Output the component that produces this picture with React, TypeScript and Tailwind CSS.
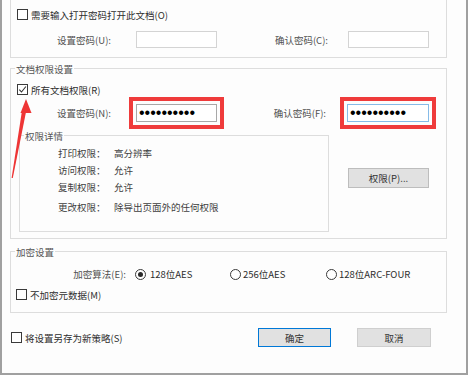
import type { ReactNode } from "react";

function Box({ checked }: { checked?: boolean }) {
  return (
    <span className="w-[11px] h-[11px] shrink-0 border border-[#3a3a3a] bg-white flex items-center justify-center">
      {checked && (
        <svg width="9" height="9" viewBox="0 0 9 9">
          <path d="M1.3 4.6 L3.5 7 L7.9 1.5" fill="none" stroke="#333" strokeWidth="1.1" />
        </svg>
      )}
    </span>
  );
}

function Radio({ on }: { on?: boolean }) {
  return (
    <span className="w-[11px] h-[11px] shrink-0 rounded-full border border-[#3a3a3a] bg-white flex items-center justify-center">
      {on && <span className="w-[5px] h-[5px] rounded-full bg-[#2a2a2a]" />}
    </span>
  );
}

function Legend({ children }: { children: ReactNode }) {
  return <div className="-mt-[7px] ml-[4px] px-[1px] w-fit h-[14px] leading-[14px] bg-[#fdfdfd] text-[#555]">{children}</div>;
}

function Dots({ focus }: { focus?: boolean }) {
  return (
    <div className={focus ? "w-[82px] h-[18px] border border-[#86bbe8] bg-white flex items-center pl-[2px]" : "w-[81px] h-[18px] border border-[#a8a8a8] bg-white flex items-center pl-[2px]"}>
      <span className="font-['Liberation_Sans',sans-serif] text-[16px] leading-none text-black">••••••••••</span>
    </div>
  );
}

export default function App() {
  return (
    <div className="relative w-[469px] h-[376px] bg-white overflow-hidden font-['Noto_Sans_CJK_SC',sans-serif] text-[9.5px] leading-[14px] text-[#3f3f3f]">
      <div className="w-[468px] h-[375px] border-l-2 border-r-2 border-b-2 border-[#a0a0a0] bg-[#fdfdfd] pl-[8px]">
        {/* 打开密码 */}
        <div className="w-[437px] h-[58px] pt-[9px] border-x border-b border-[#dddddd]">
          <div className="ml-[6px] flex items-center gap-[3px] h-[11px]">
            <Box />
            <span className="text-[#2e2e2e]">需要输入打开密码打开此文档(O)</span>
          </div>
          <div className="mt-[11px] flex items-center h-[17px]">
            <div className="w-[100px] text-right text-[#505050]">设置密码(U):</div>
            <div className="ml-[25px] w-[81px] h-[17px] border border-[#d4d4d4] bg-white" />
            <div className="w-[111px] text-right text-[#505050]">确认密码(C):</div>
            <div className="ml-[20px] w-[81px] h-[17px] border border-[#d4d4d4] bg-white" />
          </div>
        </div>

        {/* 文档权限设置 */}
        <div className="mt-[10px] w-[437px] h-[171px] border border-[#dddddd]">
          <Legend>文档权限设置</Legend>
          <div className="mt-[8px] ml-[6px] flex items-center gap-[3px] h-[11px]">
            <Box checked />
            <span className="text-[#2e2e2e]">所有文档权限(R)</span>
          </div>
          <div className="mt-[2px] flex items-center h-[32px]">
            <div className="w-[100px] text-right text-[#505050]">设置密码(N):</div>
            <div className="ml-[18px] border-[4px] border-[#ef3b3b] p-[3px]">
              <Dots />
            </div>
            <div className="w-[102px] text-right text-[#505050]">确认密码(F):</div>
            <div className="ml-[14px] border-[4px] border-[#ef3b3b] p-[3px]">
              <Dots focus />
            </div>
          </div>
          <div className="mt-[6px] flex items-start">
            <div className="ml-[8px] w-[310px] h-[97px] border border-[#dddddd]">
              <Legend>权限详情</Legend>
              <div className="pl-[38px]">
                <div className="mt-[3px] flex h-[14px]"><span className="w-[56px]">打印权限：</span><span>高分辨率</span></div>
                <div className="mt-[3px] flex h-[14px]"><span className="w-[56px]">访问权限：</span><span>允许</span></div>
                <div className="mt-[3px] flex h-[14px]"><span className="w-[56px]">复制权限：</span><span>允许</span></div>
                <div className="mt-[6px] flex h-[14px]"><span className="w-[56px]">更改权限：</span><span>除导出页面外的任何权限</span></div>
              </div>
            </div>
            <button className="ml-[19px] mt-[33px] w-[81px] h-[20px] border border-[#bdbdbd] bg-[#e1e1e1] text-[#333] flex items-center justify-center">权限(P)...</button>
          </div>
        </div>

        {/* 加密设置 */}
        <div className="mt-[12px] w-[437px] h-[62px] border border-[#dddddd]">
          <Legend>加密设置</Legend>
          <div className="mt-[8px] flex items-center h-[14px]">
            <div className="w-[115px] text-right text-[#505050]">加密算法(E):</div>
            <div className="ml-[9px] w-[95px] flex items-center gap-[4px]"><Radio on /><span className="text-[#2e2e2e]">128位AES</span></div>
            <div className="w-[96px] flex items-center gap-[2px]"><Radio /><span className="text-[#2e2e2e]">256位AES</span></div>
            <div className="flex items-center gap-[2px]"><Radio /><span className="text-[#2e2e2e]">128位ARC-FOUR</span></div>
          </div>
          <div className="mt-[8px] ml-[5px] flex items-center gap-[3px] h-[11px]">
            <Box />
            <span className="text-[#2e2e2e]">不加密元数据(M)</span>
          </div>
        </div>

        {/* 底部 */}
        <div className="mt-[15px] flex items-center h-[19px]">
          <div className="w-[248px] flex items-center gap-[3px]">
            <span className="ml-[1px]"><Box /></span>
            <span className="text-[#2e2e2e]">将设置另存为新策略(S)</span>
          </div>
          <button className="w-[73px] h-[19px] border border-[#0078d7] bg-[#e1e1e1] text-[#333] flex items-center justify-center">确定</button>
          <button className="ml-[26px] w-[74px] h-[19px] border border-[#cfcfcf] bg-[#e1e1e1] text-[#333] flex items-center justify-center">取消</button>
        </div>
      </div>

      {/* 红色箭头 */}
      <svg className="absolute left-0 top-0 pointer-events-none" width="40" height="190" viewBox="0 0 40 190">
        <polygon points="26,99 31.5,113 20.5,113" fill="#ee3535" />
        <polygon points="21.8,112 26,112 12.8,178 11.6,178" fill="#ee3535" />
      </svg>
    </div>
  );
}
